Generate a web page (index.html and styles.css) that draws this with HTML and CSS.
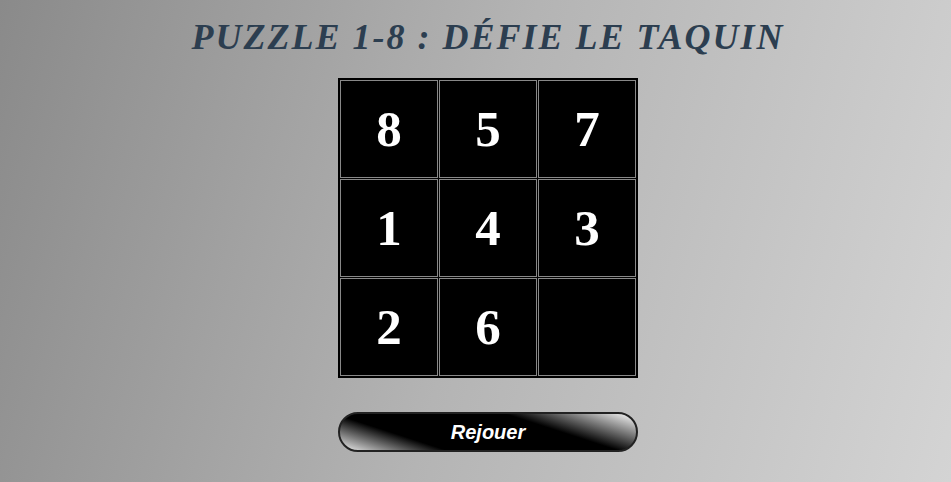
FILE: index.html
```html
<!DOCTYPE html>
<html lang="fr">
<head>
<meta charset="utf-8">
<title>Taquin</title>
<link rel="stylesheet" href="styles.css">
</head>
<body>
<main class="page">
  <h1 class="title">PUZZLE 1-8 : DÉFIE LE TAQUIN</h1>
  <div class="board">
    <div class="cell">8</div>
    <div class="cell">5</div>
    <div class="cell">7</div>
    <div class="cell">1</div>
    <div class="cell">4</div>
    <div class="cell">3</div>
    <div class="cell">2</div>
    <div class="cell">6</div>
    <div class="cell empty"></div>
  </div>
  <button class="replay" type="button">Rejouer</button>
</main>
</body>
</html>
```
FILE: styles.css
```css
html, body {
  margin: 0;
  height: 100%;
}
body {
  background: linear-gradient(105deg, #8a8a8a 0%, #b4b4b4 50%, #d4d4d4 100%);
  font-family: "Liberation Serif", "Times New Roman", serif;
}
.page {
  display: flex;
  flex-direction: column;
  align-items: center;
  padding-top: 15px;
  padding-left: 25px;
}
.title {
  margin: 0;
  font-size: 36px;
  line-height: 44px;
  font-weight: bold;
  font-style: italic;
  letter-spacing: 2px;
  color: #2c3e50;
}
.board {
  margin-top: 19px;
  display: grid;
  grid-template-columns: repeat(3, 98px);
  grid-template-rows: repeat(3, 98px);
  gap: 1px;
  padding: 1px;
  border: 1px solid #000;
  background: #000;
}
.cell {
  border: 1px solid #888;
  background: #000;
  color: #fff;
  font-size: 51px;
  font-weight: bold;
  display: flex;
  align-items: center;
  justify-content: center;
}
.replay {
  margin-top: 34px;
  width: 300px;
  height: 40px;
  border: 2px solid #222;
  border-radius: 20px;
  background: linear-gradient(18deg, #f0f0f0 0%, #000 26%, #000 68%, #fff 100%);
  color: #fff;
  font-family: "Liberation Sans", Arial, sans-serif;
  font-size: 20px;
  font-weight: bold;
  font-style: italic;
  padding: 0;
}
```
